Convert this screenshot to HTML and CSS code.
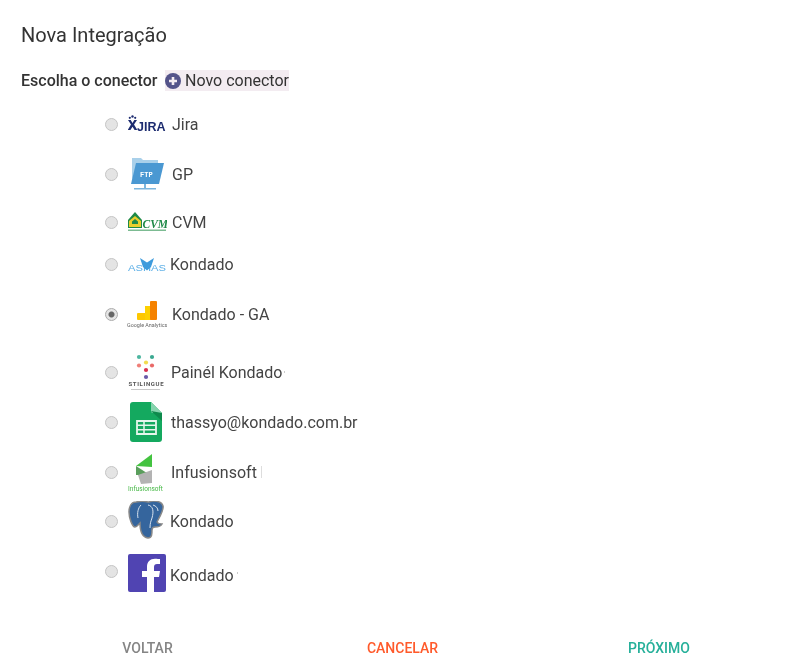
FILE: index.html
```html
<!DOCTYPE html>
<html lang="pt-BR">
<head>
<meta charset="utf-8">
<title>Nova Integração</title>
<link rel="stylesheet" href="styles.css">
</head>
<body>
<main class="page">
  <h1 class="title">Nova Integração</h1>
  <div class="subhead">
    <span class="subhead-label">Escolha o conector</span>
    <button class="new-connector" type="button">
      <svg class="plus" viewBox="0 0 16 16"><circle cx="8" cy="8" r="8" fill="#54548a"/><path d="M8 4v8M4 8h8" stroke="#f3ecf1" stroke-width="2.6"/></svg>
      Novo conector
    </button>
  </div>
  <form class="list">
    <label class="row r1">
      <input type="radio" name="c">
      <span class="logo"><svg width="38" height="18" viewBox="0 0 38 18"><g fill="#1d2c70"><circle cx="4.500" cy="1.500" r="1.200"/><circle cx="1.800" cy="2.800" r="1.100"/><circle cx="7.200" cy="2.800" r="1.100"/><path d="M0 5h2.700l1.800 3 1.800-3h2.700l-3 4.500 3.300 5.500h-2.700l-2.100-3.300-2.100 3.300h-2.700l3.300-5.500z"/><text x="9" y="15.500" class="t-jira">JIRA</text></g></svg></span>
      <span class="name">Jira</span>
    </label>
    <label class="row r2">
      <input type="radio" name="c">
      <span class="logo"><svg width="36" height="35" viewBox="0 0 36 35"><path d="M3 4V1h9l2 2h15v3H8L3 24z" fill="#a9d0ea"/><path d="M7 6h28l-5 21H2z" fill="#4a98d2"/><text x="11" y="20" class="t-ftp">FTP</text><path d="M15 27h2v4h-2zM5 31h22v1.500H5z" fill="#7cb6de"/></svg></span>
      <span class="name">GP</span>
    </label>
    <label class="row r3">
      <input type="radio" name="c">
      <span class="logo"><svg width="39" height="20" viewBox="0 0 39 20"><path d="M0 8L7 0l7 8v8H0z" fill="#1f8a48"/><path d="M1 9l6-5 6 5v6H1z" fill="#e9cf2e"/><path d="M4 9.500l3-2.500 3 2.500v2.500H4z" fill="#1f8a48"/><text x="14.500" y="15.500" class="t-cvm">CVM</text><path d="M0 17.500h38v1.500H0z" fill="#7cbb92"/></svg></span>
      <span class="name">CVM</span>
    </label>
    <label class="row r4">
      <input type="radio" name="c">
      <span class="logo logo-tight"><svg width="38" height="16" viewBox="0 0 38 16"><text x="0" y="15" class="t-asas" textLength="38" lengthAdjust="spacingAndGlyphs">ASHAS</text><path d="M12 2l7 4.500 7-4.500-3 9-4 3.500-4-3.500z" fill="#3e9bdc"/></svg></span>
      <span class="name">Kondado</span>
    </label>
    <label class="row r5">
      <input type="radio" name="c" checked>
      <span class="logo"><svg width="40" height="32" viewBox="0 0 40 32"><rect x="10" y="15" width="9" height="7" rx="1" fill="#fdc700"/><rect x="18" y="8" width="8" height="14" fill="#fdd000"/><rect x="23" y="3" width="7" height="19" rx="1" fill="#f58200"/><text x="0" y="29" class="t-ga">Google Analytics</text></svg></span>
      <span class="name">Kondado - GA</span>
    </label>
    <label class="row r6">
      <input type="radio" name="c">
      <span class="logo logo-narrow"><svg width="36" height="38" viewBox="0 0 36 38"><g><circle cx="11" cy="4" r="2.100" fill="#4db6a0"/><circle cx="24" cy="4" r="2.100" fill="#3aa890"/><circle cx="18" cy="9.500" r="2.100" fill="#f2dc50"/><circle cx="11" cy="12.500" r="2.100" fill="#ef7f78"/><circle cx="24" cy="12.500" r="2.100" fill="#e96a68"/><circle cx="18" cy="17" r="2.100" fill="#d8304f"/><circle cx="18" cy="24" r="2.100" fill="#6a5aa8"/></g><text x="0.500" y="33" class="t-stil" textLength="35">STILINGUE</text><path d="M3 36h29v1H3z" fill="#c8c8c8"/></svg></span>
      <span class="name">Painél Kondado</span>
      <span class="tick"></span>
    </label>
    <label class="row r7">
      <input type="radio" name="c">
      <span class="logo logo-narrow"><svg width="32" height="40" viewBox="0 0 32 40"><path d="M3 0h18l11 11v26a3 3 0 0 1-3 3H3a3 3 0 0 1-3-3V3a3 3 0 0 1 3-3z" fill="#14a95f"/><path d="M21 0l11 11H23a2 2 0 0 1-2-2z" fill="#86d4ae"/><path d="M21 9l11 10v-8z" fill="#0d8a4c"/><path d="M7 19h19v13H7z" fill="none" stroke="#e5f6ec" stroke-width="1.800"/><path d="M7 23.300h19M7 27.700h19M14 19v13" stroke="#e5f6ec" stroke-width="1.500"/></svg></span>
      <span class="name">thassyo@kondado.com.br</span>
    </label>
    <label class="row r8">
      <input type="radio" name="c">
      <span class="logo logo-narrow"><svg width="36" height="40" viewBox="0 0 36 40"><path d="M24 2L8 14l16 1z" fill="#43c340"/><path d="M8 14l14 9H8z" fill="#5a9e5c"/><path d="M10 23l14-5v13l-11 1z" fill="#b3b3b3"/><text x="0" y="39" class="t-inf" textLength="35">Infusionsoft</text></svg></span>
      <span class="name">Infusionsoft</span>
      <span class="tick tick-tall"></span>
    </label>
    <label class="row r9">
      <input type="radio" name="c">
      <span class="logo logo-tight"><svg width="38" height="40" viewBox="0 0 38 40"><path d="M8 1C3 1 1 6 1 11c0 5 3 15 6 15 2 0 3-2 5-4 0 6 1 14 8 15 4 0 4-4 4-8 0-2 1-3 3-3 3 0 6-1 7-3-2 0-4 0-5-2 2-4 7-12 6-16-1-4-5-5-10-5-2 0-3 1-5 1-3-1-8-1-12 0z" fill="#35659d" stroke="#888" stroke-width="1.500"/><path d="M13 4c-3 3-4 8-3 13M20 4c5 1 6 6 4 13-1 3-2 5-2 10M25 4c3 1 5 3 5 6" fill="none" stroke="#d8e2ee" stroke-width="1"/></svg></span>
      <span class="name">Kondado</span>
    </label>
    <label class="row r10">
      <input type="radio" name="c">
      <span class="logo logo-tight"><svg width="38" height="38" viewBox="0 0 38 38"><rect width="38" height="38" rx="2" fill="#5044b2"/><path d="M26 38V23h5l1-6h-6v-4c0-2 1-3 3-3h3V5c-1 0-3-.3-5-.3-5 0-8 3-8 8V17h-5v6h5v15z" fill="#fff"/></svg></span>
      <span class="name">Kondado</span>
      <span class="tick tick-dot"></span>
    </label>
  </form>
  <footer class="actions">
    <button class="action back" type="button">Voltar</button>
    <button class="action cancel" type="button">Cancelar</button>
    <button class="action next" type="button">Próximo</button>
  </footer>
</main>
</body>
</html>
```
FILE: styles.css
```css
* { box-sizing: border-box; }
html, body { margin: 0; background: #fff; }
body { font-family: Roboto, "Liberation Sans", sans-serif; color: #333; overflow: hidden; }
.page { width: 789px; height: 665px; padding: 23px 0 0 21px; display: flex; flex-direction: column; filter: blur(.35px); }
.title { margin: 0; font-size: 20px; line-height: 24px; font-weight: 400; color: #333; }
.subhead { margin-top: 23px; display: flex; align-items: center; height: 21px; }
.subhead-label { font-size: 16px; font-weight: 500; color: #333; width: 144px; }
.new-connector { display: flex; align-items: center; height: 21px; padding: 0; border: 0; background: #f3ecf1; color: #333; font: 400 16px Roboto, sans-serif; }
.plus { width: 16px; height: 16px; margin-right: 4px; }
.list { margin: 11px 0 0; padding-left: 84px; display: flex; flex-direction: column; }
.row { display: flex; align-items: center; font-size: 16px; color: #444; }
.row input { appearance: none; width: 13px; height: 13px; margin: 0 9px 0 0; flex: none; border: 1px solid #c4c4c4; border-radius: 50%; background: #e4e4e4; }
.row input:checked { background: radial-gradient(circle, #666 0 2.500px, #e4e4e4 3.500px); border-color: #aaa; }
.logo { display: flex; justify-content: center; width: 40px; flex: none; margin-right: 5px; }
.logo-tight { margin-right: 3px; }
.logo-narrow { width: 38px; margin-right: 6px; }
.name { white-space: nowrap; }
.tick { width: 1px; height: 2px; background: #ccc; margin-left: 2px; }
.tick-tall { height: 12px; background: #ddd; margin-left: 4px; }
.tick-dot { margin-left: 3px; }
.r1 { height: 24px; margin-top: 10px; }
.r2 { height: 36px; margin-top: 20px; }
.r3 { height: 24px; margin-top: 18px; }
.r4 { height: 20px; margin-top: 20px; }
.r5 { height: 32px; margin-top: 24px; }
.r6 { height: 40px; margin-top: 22px; }
.r7 { height: 40px; margin-top: 10px; }
.r8 { height: 40px; margin-top: 10px; }
.r9 { height: 40px; margin-top: 9px; }
.r10 { height: 38px; margin-top: 13px; }
.r10 input { margin-bottom: 4px; }
.r10 .name { margin-top: 4px; }
.actions { margin-top: 47px; display: grid; grid-template-columns: 253px 257px 256px; }
.action { border: 0; background: none; padding: 0; font: 500 14px/18px Roboto, sans-serif; text-transform: uppercase; text-align: center; }
.back { color: #858585; }
.cancel { color: #ff5a2b; }
.next { color: #26b09a; }
.t-jira { font: 700 12.500px "Liberation Sans", sans-serif; }
.t-ftp { font: 700 7px "Liberation Mono", monospace; fill: #fff; }
.t-cvm { font: italic 700 11.500px "Liberation Serif", serif; fill: #1f8a48; }
.t-asas { font: 400 9px "Liberation Sans", sans-serif; fill: #5aaee6; }
.t-ga { font: 400 5.400px Roboto, sans-serif; fill: #666; }
.t-stil { font: 700 6px Roboto, sans-serif; fill: #555; }
.t-inf { font: 400 6.500px Roboto, sans-serif; fill: #45b845; }
```
